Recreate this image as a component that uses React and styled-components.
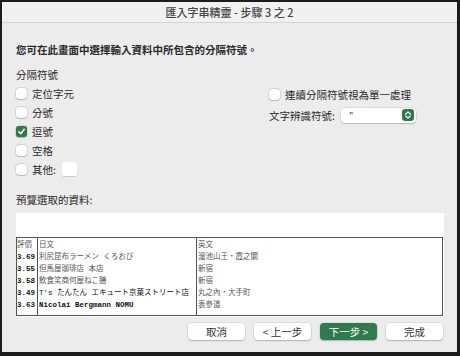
import React from 'react';
import styled, { createGlobalStyle } from 'styled-components';

const GlobalStyle = createGlobalStyle`
  html, body {
    margin: 0;
    padding: 0;
    background: #1c1c1c;
  }
  * {
    box-sizing: border-box;
  }
`;

const Frame = styled.div`
  width: 460px;
  height: 356px;
  padding: 2px 3px 4px 2px;
  background: #1c1c1c;
`;

const Dialog = styled.div`
  display: flex;
  flex-direction: column;
  height: 100%;
  background: #ececec;
  font-family: "Noto Sans CJK TC", "Noto Sans", sans-serif;
  font-size: 10.5px;
  color: #2a2a2a;
`;

const TitleBar = styled.div`
  height: 21px;
  display: flex;
  align-items: center;
  justify-content: center;
  background: #f0f0f0;
  border-bottom: 1px solid #d4d4d4;
  font-size: 11px;
  font-weight: 500;
  color: #444;
`;

const Body = styled.div`
  display: flex;
  flex-direction: column;
  padding: 0 14px;
`;

const Instruction = styled.div`
  margin-top: 20px;
  line-height: 14px;
  font-weight: 700;
`;

const Options = styled.div`
  display: grid;
  grid-template-columns: 253px 1fr;
  margin-top: 11px;
`;

const Column = styled.div`
  display: flex;
  flex-direction: column;
  padding-top: ${p => p.$top || 0}px;
`;

const Heading = styled.div`
  line-height: 14px;
  margin-bottom: 1.5px;
`;

const Row = styled.label`
  display: flex;
  align-items: center;
  gap: 5px;
  height: ${p => p.$h || 19}px;
`;

const Box = styled.span`
  width: 11px;
  height: 11px;
  border-radius: 3px;
  display: flex;
  align-items: center;
  justify-content: center;
  background: ${p => (p.$checked ? '#2d7a4b' : '#fff')};
  box-shadow: 0 0 0 0.5px rgba(0, 0, 0, 0.18), 0 0.5px 1px rgba(0, 0, 0, 0.15);
`;

const SmallInput = styled.span`
  width: 15px;
  height: 14px;
  margin-left: 1px;
  background: #fff;
  border-radius: 2px;
  box-shadow: 0 0.5px 1px rgba(0, 0, 0, 0.15);
`;

const Select = styled.div`
  width: 75px;
  height: 15px;
  margin-left: 1px;
  display: flex;
  align-items: center;
  justify-content: space-between;
  padding: 0 2px 0 8px;
  background: #fff;
  border-radius: 4px;
  box-shadow: 0 0 0 0.5px rgba(0, 0, 0, 0.12), 0 1px 1.5px rgba(0, 0, 0, 0.18);
  font-size: 9px;
  line-height: 9px;
  align-self: center;
`;

const Stepper = styled.span`
  width: 12px;
  height: 12px;
  border-radius: 3px;
  background: #2d7a4b;
  display: flex;
  align-items: center;
  justify-content: center;
`;

const PreviewLabel = styled.div`
  margin-top: 14px;
  line-height: 14px;
`;

const PreviewArea = styled.div`
  margin-top: 6px;
  height: 104px;
  width: 428px;
  padding-top: 24px;
  background: #fff;
`;

const Table = styled.div`
  width: 427px;
  height: 79px;
  border: 1px solid #555;
  display: grid;
  grid-template-columns: 20px 159px 1fr;
  font-family: "Liberation Mono", "Noto Sans CJK JP", monospace;
  font-size: 7.5px;
  color: #555;
`;

const Col = styled.div`
  display: flex;
  flex-direction: column;
  padding: 1px 0 0 ${p => (p.$first ? 0 : 1)}px;
  border-left: ${p => (p.$first ? 'none' : '1px solid #555')};
  min-width: 0;
`;

const Cell = styled.div`
  height: 12px;
  line-height: 12px;
  white-space: nowrap;
  overflow: hidden;
  font-weight: ${p => (p.$bold ? 700 : 400)};
  color: ${p => (p.$dark ? '#111' : '#555')};
`;

const Buttons = styled.div`
  display: flex;
  justify-content: flex-end;
  gap: 9px;
  margin-top: 6px;
`;

const Button = styled.button`
  width: 57px;
  height: 17px;
  border: none;
  border-radius: 4px;
  font-family: inherit;
  font-size: 10.5px;
  line-height: 17px;
  padding: 0;
  color: ${p => (p.$primary ? '#fff' : '#333')};
  background: ${p => (p.$primary ? '#2f7b4c' : '#fff')};
  box-shadow: 0 0 0 0.5px rgba(0, 0, 0, 0.12), 0 1px 1.5px rgba(0, 0, 0, 0.2);
`;

const Check = () => (
  <svg width="9" height="9" viewBox="0 0 10 10">
    <polyline points="2,5.3 4.2,7.5 8,2.6" fill="none" stroke="#fff" strokeWidth="1.7" strokeLinecap="round" strokeLinejoin="round" />
  </svg>
);

const Chevrons = () => (
  <svg width="8" height="10" viewBox="0 0 8 10">
    <polyline points="1.8,4 4,1.8 6.2,4" fill="none" stroke="#fff" strokeWidth="1.2" strokeLinecap="round" strokeLinejoin="round" />
    <polyline points="1.8,6 4,8.2 6.2,6" fill="none" stroke="#fff" strokeWidth="1.2" strokeLinecap="round" strokeLinejoin="round" />
  </svg>
);

const delimiters = [
  { label: '定位字元' },
  { label: '分號' },
  { label: '逗號', checked: true },
  { label: '空格' },
];

const rows = [
  { score: '3.69', ja: '利尻昆布ラーメン くろおび', en: '溜池山王・霞之關' },
  { score: '3.55', ja: '但馬屋珈琲店 本店', en: '新宿' },
  { score: '3.58', ja: '飲食笑商何屋ねこ膳', en: '新宿' },
  { score: '3.49', ja: "T's たんたん エキュート京葉ストリート店", en: '丸之內・大手町', darkJa: true },
  { score: '3.63', ja: 'Nicolai Bergmann NOMU', en: '表參道', darkJa: true, boldJa: true },
];

const App = () => (
  <Frame>
    <GlobalStyle />
    <Dialog>
      <TitleBar>匯入字串精靈 - 步驟 3 之 2</TitleBar>
      <Body>
        <Instruction>您可在此畫面中選擇輸入資料中所包含的分隔符號。</Instruction>

        <Options>
          <Column>
            <Heading>分隔符號</Heading>
            {delimiters.map(d => (
              <Row key={d.label}>
                <Box $checked={d.checked}>{d.checked && <Check />}</Box>
                {d.label}
              </Row>
            ))}
            <Row>
              <Box />
              其他:
              <SmallInput />
            </Row>
          </Column>

          <Column $top={17}>
            <Row>
              <Box />
              連續分隔符號視為單一處理
            </Row>
            <Row $h={22}>
              文字辨識符號:
              <Select>
                <span>"</span>
                <Stepper><Chevrons /></Stepper>
              </Select>
            </Row>
          </Column>
        </Options>

        <PreviewLabel>預覽選取的資料:</PreviewLabel>
        <PreviewArea>
          <Table>
            <Col $first>
              <Cell>評價</Cell>
              {rows.map(r => (
                <Cell key={r.score + r.ja} $bold $dark>{r.score}</Cell>
              ))}
            </Col>
            <Col>
              <Cell>日文</Cell>
              {rows.map(r => (
                <Cell key={r.ja} $dark={r.darkJa} $bold={r.boldJa}>{r.ja}</Cell>
              ))}
            </Col>
            <Col>
              <Cell>英文</Cell>
              {rows.map(r => (
                <Cell key={r.ja + r.en}>{r.en}</Cell>
              ))}
            </Col>
          </Table>
        </PreviewArea>

        <Buttons>
          <Button>取消</Button>
          <Button>&lt; 上一步</Button>
          <Button $primary>下一步 &gt;</Button>
          <Button>完成</Button>
        </Buttons>
      </Body>
    </Dialog>
  </Frame>
);

export default App;
